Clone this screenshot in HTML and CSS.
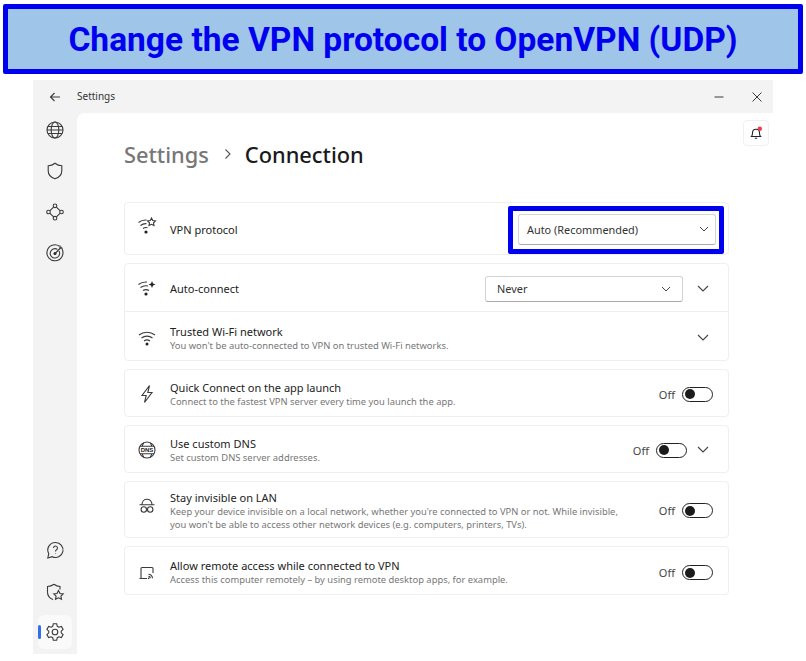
FILE: index.html
```html
<!DOCTYPE html>
<html lang="en">
<head>
  <meta charset="UTF-8">
  <title>Change the VPN protocol</title>
  <link rel="stylesheet" href="styles.css">
</head>
<body>
  <h1 class="banner">Change the VPN protocol to OpenVPN (UDP)</h1>

  <div class="app">
    <header class="titlebar">
      <svg class="back" width="12" height="12" viewBox="0 0 12 12"><path d="M11 6H1.5M5.5 2 1.5 6l4 4"/></svg>
      <span class="titlebar-name">Settings</span>
      <svg class="win-btn" width="12" height="12" viewBox="0 0 12 12"><path d="M1.5 6h9"/></svg>
      <svg class="win-btn close" width="12" height="12" viewBox="0 0 12 12"><path d="M1.5 1.5l9 9M10.5 1.5l-9 9"/></svg>
    </header>

    <div class="app-body">
      <nav class="sidebar">
        <div class="nav-top">
          <svg class="nav-icon" width="20" height="20" viewBox="0 0 20 20"><circle cx="10" cy="10" r="8"/><ellipse cx="10" cy="10" rx="3.8" ry="8"/><path d="M2.800 6.500h14.400M2 10h16M2.800 13.500h14.400"/></svg>
          <svg class="nav-icon" width="20" height="20" viewBox="0 0 20 20"><path d="M10 2.200c2 1.600 4.200 2.400 6.800 2.500v5c0 4-2.600 6.700-6.800 8.100-4.200-1.400-6.800-4.100-6.800-8.100v-5C5.800 4.600 8 3.800 10 2.200z"/></svg>
          <svg class="nav-icon" width="20" height="20" viewBox="0 0 20 20"><circle cx="10" cy="3.800" r="1.800"/><circle cx="3.500" cy="10" r="1.800"/><circle cx="16.500" cy="10" r="1.800"/><circle cx="10" cy="16.200" r="1.800"/><path d="M8.600 5.200 5 8.600M11.400 5.200 15 8.600M5 11.400l3.600 3.400M15 11.400l-3.600 3.400"/></svg>
          <svg class="nav-icon" width="20" height="20" viewBox="0 0 20 20"><path d="M14.500 3.200A8 8 0 1 0 17 6"/><path d="M12.500 6.400A4.700 4.700 0 1 0 14 8"/><circle class="solid" cx="10" cy="10.500" r="1.500"/><path d="M10 10.500 16.500 4M15 2.500v2.800h2.800"/></svg>
        </div>
        <div class="nav-bottom">
          <svg class="nav-icon" width="20" height="20" viewBox="0 0 20 20"><path d="M10.500 2.500a7.500 7.500 0 1 1-3.300 14.200L2.800 18l1-4.300A7.500 7.500 0 0 1 10.500 2.500z"/><path d="M8.500 8a2 2 0 1 1 3 1.800c-.8.500-1 .9-1 1.700M10.500 13.500v.6"/></svg>
          <svg class="nav-icon" width="20" height="20" viewBox="0 0 20 20"><path d="M9 2.200c1.800 1.400 3.700 2.100 6 2.300v3M8 17.600c-3.300-1.400-5.500-4-5.500-7.400V4.500c2.500-.1 4.600-.9 6.500-2.300"/><path d="m13.500 8.500 1.500 3 3.200.4-2.300 2.200.6 3.200-3-1.500-3 1.500.6-3.200-2.300-2.200 3.200-.4z"/></svg>
          <div class="nav-active">
            <span class="nav-marker"></span>
            <svg class="nav-icon" width="20" height="20" viewBox="0 0 20 20"><circle cx="10" cy="10" r="2.800"/><path d="M8.300 1.800h3.400l.6 2.500 1.600.9 2.500-.7 1.700 3-1.900 1.700v1.600l1.900 1.700-1.700 3-2.500-.7-1.600.9-.6 2.500H8.300l-.6-2.500-1.600-.9-2.500.7-1.700-3L3.800 10.800V9.200L1.900 7.500l1.700-3 2.500.7 1.600-.9z"/></svg>
          </div>
        </div>
      </nav>

      <main class="content">
        <div class="top-row">
          <button class="bell">
            <svg width="14" height="14" viewBox="0 0 14 14"><path d="M2.500 10.500c.8-.8 1-1.500 1-3.500 0-2.200 1.500-3.800 3.500-3.800S10.500 4.800 10.500 7c0 2 .2 2.700 1 3.500zM5.800 12.300h2.400"/><circle class="bell-dot" cx="10.800" cy="2.800" r="2.200"/></svg>
          </button>
        </div>

        <h2 class="crumbs">
          <span class="crumb-parent">Settings</span>
          <svg class="crumb-sep" width="10" height="12" viewBox="0 0 10 12"><path d="M2.500 1.500 7 6l-4.500 4.500"/></svg>
          <span>Connection</span>
        </h2>

        <div class="cards">
          <section class="card">
            <div class="row row-protocol">
              <svg class="row-icon" width="22" height="22" viewBox="0 0 22 22"><path d="M2.500 6.500C5 4.500 8 3.800 10.500 4M4.500 9.500c2-1.500 4-2 6-1.800M7 12.500c1.500-1 3-1.200 4.500-.8"/><circle class="solid" cx="10" cy="16" r="1.600"/><path d="m15.500 2 1.200 2.500 2.800.3-2 2 .5 2.800-2.500-1.300-2.500 1.300.5-2.800-2-2 2.800-.3z"/></svg>
              <div class="row-text"><div class="row-title">VPN protocol</div></div>
              <div class="highlight">
                <div class="select select-protocol">
                  <span>Auto (Recommended)</span>
                  <svg class="chev-sm" width="10" height="10" viewBox="0 0 10 10"><path d="M1 3l4 4 4-4"/></svg>
                </div>
              </div>
            </div>
          </section>

          <section class="card">
            <div class="row row-auto">
              <svg class="row-icon" width="22" height="22" viewBox="0 0 22 22"><path d="M2.500 6.500C5 4.500 8 3.800 11 4M4.500 9.500c2-1.500 5-2 7.500-1.500M7 12.500c2-1.200 4-1.200 6 0"/><circle class="solid" cx="10" cy="16" r="1.600"/><path class="solid" d="m16 3 1 2.500 2.500 1-2.500 1-1 2.500-1-2.500-2.500-1 2.500-1z"/></svg>
              <div class="row-text"><div class="row-title">Auto-connect</div></div>
              <div class="select select-never">
                <span>Never</span>
                <svg class="chev-sm" width="10" height="10" viewBox="0 0 10 10"><path d="M1 3l4 4 4-4"/></svg>
              </div>
              <svg class="chev" width="20" height="12" viewBox="0 0 20 12"><path d="M5 3l5 5 5-5"/></svg>
            </div>
            <div class="row row-wifi row-divided">
              <svg class="row-icon" width="22" height="22" viewBox="0 0 22 22"><path d="M3 8c4.500-3.600 11.500-3.600 16 0M5.500 11c3.200-2.500 7.800-2.500 11 0M8 14c1.800-1.300 4.200-1.300 6 0"/><circle class="solid" cx="11" cy="17" r="1.500"/></svg>
              <div class="row-text">
                <div class="row-title">Trusted Wi-Fi network</div>
                <div class="row-sub">You won't be auto-connected to VPN on trusted Wi-Fi networks.</div>
              </div>
              <svg class="chev" width="20" height="12" viewBox="0 0 20 12"><path d="M5 3l5 5 5-5"/></svg>
            </div>
          </section>

          <section class="card">
            <div class="row row-std">
              <svg class="row-icon" width="22" height="22" viewBox="0 0 22 22"><path d="M13.500 2.500 6 12.500h4.200L8.500 19.500l7.500-10h-4.200z"/></svg>
              <div class="row-text">
                <div class="row-title">Quick Connect on the app launch</div>
                <div class="row-sub">Connect to the fastest VPN server every time you launch the app.</div>
              </div>
              <span class="off">Off</span>
              <span class="toggle"><span class="knob"></span></span>
            </div>
          </section>

          <section class="card">
            <div class="row row-std">
              <svg class="row-icon" width="22" height="22" viewBox="0 0 22 22"><circle cx="11" cy="11" r="8"/><path d="M4 7.200h14M4 14.800h14M7.800 3.800c-1.200 2-1.500 3-1.500 3.400M14.200 3.800c1.200 2 1.500 3 1.500 3.400M7.800 18.200c-1.200-2-1.500-3-1.500-3.400M14.200 18.200c1.200-2 1.500-3 1.500-3.400"/><text class="dns" x="11" y="13" text-anchor="middle">DNS</text></svg>
              <div class="row-text">
                <div class="row-title">Use custom DNS</div>
                <div class="row-sub">Set custom DNS server addresses.</div>
              </div>
              <span class="off">Off</span>
              <span class="toggle"><span class="knob"></span></span>
              <svg class="chev chev-after" width="20" height="12" viewBox="0 0 20 12"><path d="M5 3l5 5 5-5"/></svg>
            </div>
          </section>

          <section class="card">
            <div class="row row-tall">
              <svg class="row-icon icon-up" width="22" height="22" viewBox="0 0 22 22"><path d="M6 8.500c0-7 10-7 10 0M3.500 8.800h15"/><circle cx="7.800" cy="13.500" r="2.700"/><circle cx="14.200" cy="13.500" r="2.700"/></svg>
              <div class="row-text">
                <div class="row-title">Stay invisible on LAN</div>
                <div class="row-sub">Keep your device invisible on a local network, whether you're connected to VPN or not. While invisible,<br>you won't be able to access other network devices (e.g. computers, printers, TVs).</div>
              </div>
              <span class="off">Off</span>
              <span class="toggle"><span class="knob"></span></span>
            </div>
          </section>

          <section class="card">
            <div class="row row-std row-last">
              <svg class="row-icon" width="22" height="22" viewBox="0 0 22 22"><path d="M11 16.500H3.500M5 16V6.500a1 1 0 0 1 1-1h10a1 1 0 0 1 1 1V11"/><path class="thin" d="M12.500 12.200c2 0 4 1.800 4 4M12.500 14.400c.9 0 1.800.8 1.800 1.800"/><circle class="solid" cx="12.700" cy="16.300" r=".8"/></svg>
              <div class="row-text">
                <div class="row-title">Allow remote access while connected to VPN</div>
                <div class="row-sub">Access this computer remotely – by using remote desktop apps, for example.</div>
              </div>
              <span class="off">Off</span>
              <span class="toggle"><span class="knob"></span></span>
            </div>
          </section>
        </div>
      </main>
    </div>
  </div>
</body>
</html>
```

FILE: styles.css
```css
body {
  margin: 0;
  font-family: "Noto Sans", "Open Sans", sans-serif;
  background: #fff;
  color: #1c1c1c;
}

svg {
  fill: none;
  stroke: #3a3a3a;
  stroke-width: 1.1;
  flex-shrink: 0;
}

svg .solid {
  fill: #222;
  stroke: none;
}

.banner {
  box-sizing: border-box;
  margin: 4px 3px 6px;
  height: 70px;
  padding-top: 2px;
  border: 5px solid #0000f0;
  border-radius: 2px;
  background: #9fc5e8;
  color: #0000f0;
  font-family: Roboto, sans-serif;
  font-size: 33.500px;
  font-weight: 700;
  line-height: 58px;
  text-align: center;
}

.app {
  width: 740px;
  height: 574px;
  margin-left: 33px;
  background: #f3f3f3;
  display: flex;
  flex-direction: column;
}

.titlebar {
  height: 33px;
  flex-shrink: 0;
  display: flex;
  align-items: center;
  font-size: 10px;
  line-height: 12px;
  color: #333;
}

.back {
  margin-left: 16px;
}

.titlebar-name {
  margin-left: 16px;
  margin-top: -2px;
  flex: 1;
}

.win-btn {
  margin-right: 13px;
  stroke-width: 1;
}

.win-btn.close {
  margin-left: 13px;
  margin-right: 10px;
}

.app-body {
  flex: 1;
  display: flex;
  min-height: 0;
}

.sidebar {
  width: 44px;
  flex-shrink: 0;
  display: flex;
  flex-direction: column;
  justify-content: space-between;
  align-items: center;
  padding-bottom: 5px;
  box-sizing: border-box;
}

.nav-top {
  display: flex;
  flex-direction: column;
  gap: 21px;
  padding-top: 7px;
}

.nav-bottom {
  display: flex;
  flex-direction: column;
  align-items: center;
  gap: 22px;
}

.nav-active {
  position: relative;
  width: 34px;
  height: 34px;
  margin-top: -9px;
  background: #fafafa;
  border-radius: 6px;
  display: flex;
  align-items: center;
  justify-content: center;
}

.nav-marker {
  position: absolute;
  left: 0;
  top: 10px;
  width: 3px;
  height: 14px;
  border-radius: 2px;
  background: #2f6fed;
}

.content {
  flex: 1;
  background: #fff;
  border-top-left-radius: 8px;
  padding: 7px 4px 0 47px;
  min-width: 0;
}

.top-row {
  display: flex;
  justify-content: flex-end;
}

.bell {
  box-sizing: border-box;
  width: 26px;
  height: 26px;
  padding: 0;
  border: 1px solid #f0f0f0;
  border-radius: 4px;
  background: #fff;
  display: flex;
  align-items: center;
  justify-content: center;
}

.bell svg {
  stroke: #222;
}

.bell-dot {
  fill: #f0384f;
  stroke: none;
}

.crumbs {
  margin: -7px 0 0;
  height: 30px;
  display: flex;
  align-items: center;
  font-size: 21.800px;
  font-weight: 500;
  color: #1a1a1a;
}

.crumb-parent {
  color: #777;
}

.crumb-sep {
  margin: 0 12px 0 14px;
  stroke: #555;
}

.cards {
  width: 605px;
  margin-top: 33px;
  display: flex;
  flex-direction: column;
  gap: 8px;
}

.card {
  background: #fff;
  border: 1px solid #efefef;
  border-radius: 4px;
}

.row {
  display: flex;
  align-items: center;
  box-sizing: border-box;
  padding: 2px 15px 0 11px;
}

.row-protocol {
  height: 51px;
  padding-right: 4px;
}

.row-auto {
  height: 47px;
}

.row-wifi {
  height: 49px;
  padding-top: 4px;
}

.row-std {
  height: 46px;
}

.row-last {
  height: 47px;
  padding-top: 4px;
}

.row-tall {
  height: 55px;
}

.row-divided {
  border-top: 1px solid #efefef;
}

.row-icon {
  margin-right: 12px;
}

.icon-up {
  margin-top: -8px;
}

.row-protocol .row-icon {
  margin-top: -6px;
}

.row-text {
  flex: 1;
  min-width: 0;
}

.row-title {
  font-size: 11px;
  line-height: 14px;
  color: #222;
}

.row-sub {
  font-size: 9.400px;
  line-height: 13px;
  color: #777;
}

.dns {
  font-family: "Liberation Sans", sans-serif;
  font-size: 6px;
  font-weight: 700;
  fill: #222;
  stroke: #fff;
  stroke-width: 1.500;
  paint-order: stroke;
}

.highlight {
  box-sizing: border-box;
  width: 216px;
  height: 48px;
  border: 5px solid #0000f0;
  border-radius: 2px;
  padding: 3px 3px 3px 5px;
}

.select {
  box-sizing: border-box;
  display: flex;
  align-items: center;
  justify-content: space-between;
  height: 31px;
  width: 198px;
  padding: 0 6px 0 8px;
  border: 1px solid #d4d4d4;
  border-bottom-color: #aaa;
  border-radius: 3px;
  background: #fff;
  font-size: 10.900px;
  color: #333;
}

.select-never {
  height: 26px;
  margin-right: 10px;
  padding-left: 11px;
  padding-right: 11px;
}

.chev-sm {
  stroke: #444;
  stroke-width: 1;
}

.chev {
  stroke: #444;
}

.chev-after {
  margin-left: 6px;
}

.off {
  font-size: 11px;
  color: #444;
  margin-right: 7px;
}

.toggle {
  box-sizing: border-box;
  width: 31px;
  height: 15px;
  border: 1px solid #222;
  border-radius: 8px;
  display: flex;
  align-items: center;
  padding-left: 2px;
}

.knob {
  width: 10px;
  height: 10px;
  border-radius: 50%;
  background: #1c1c1c;
}
```
